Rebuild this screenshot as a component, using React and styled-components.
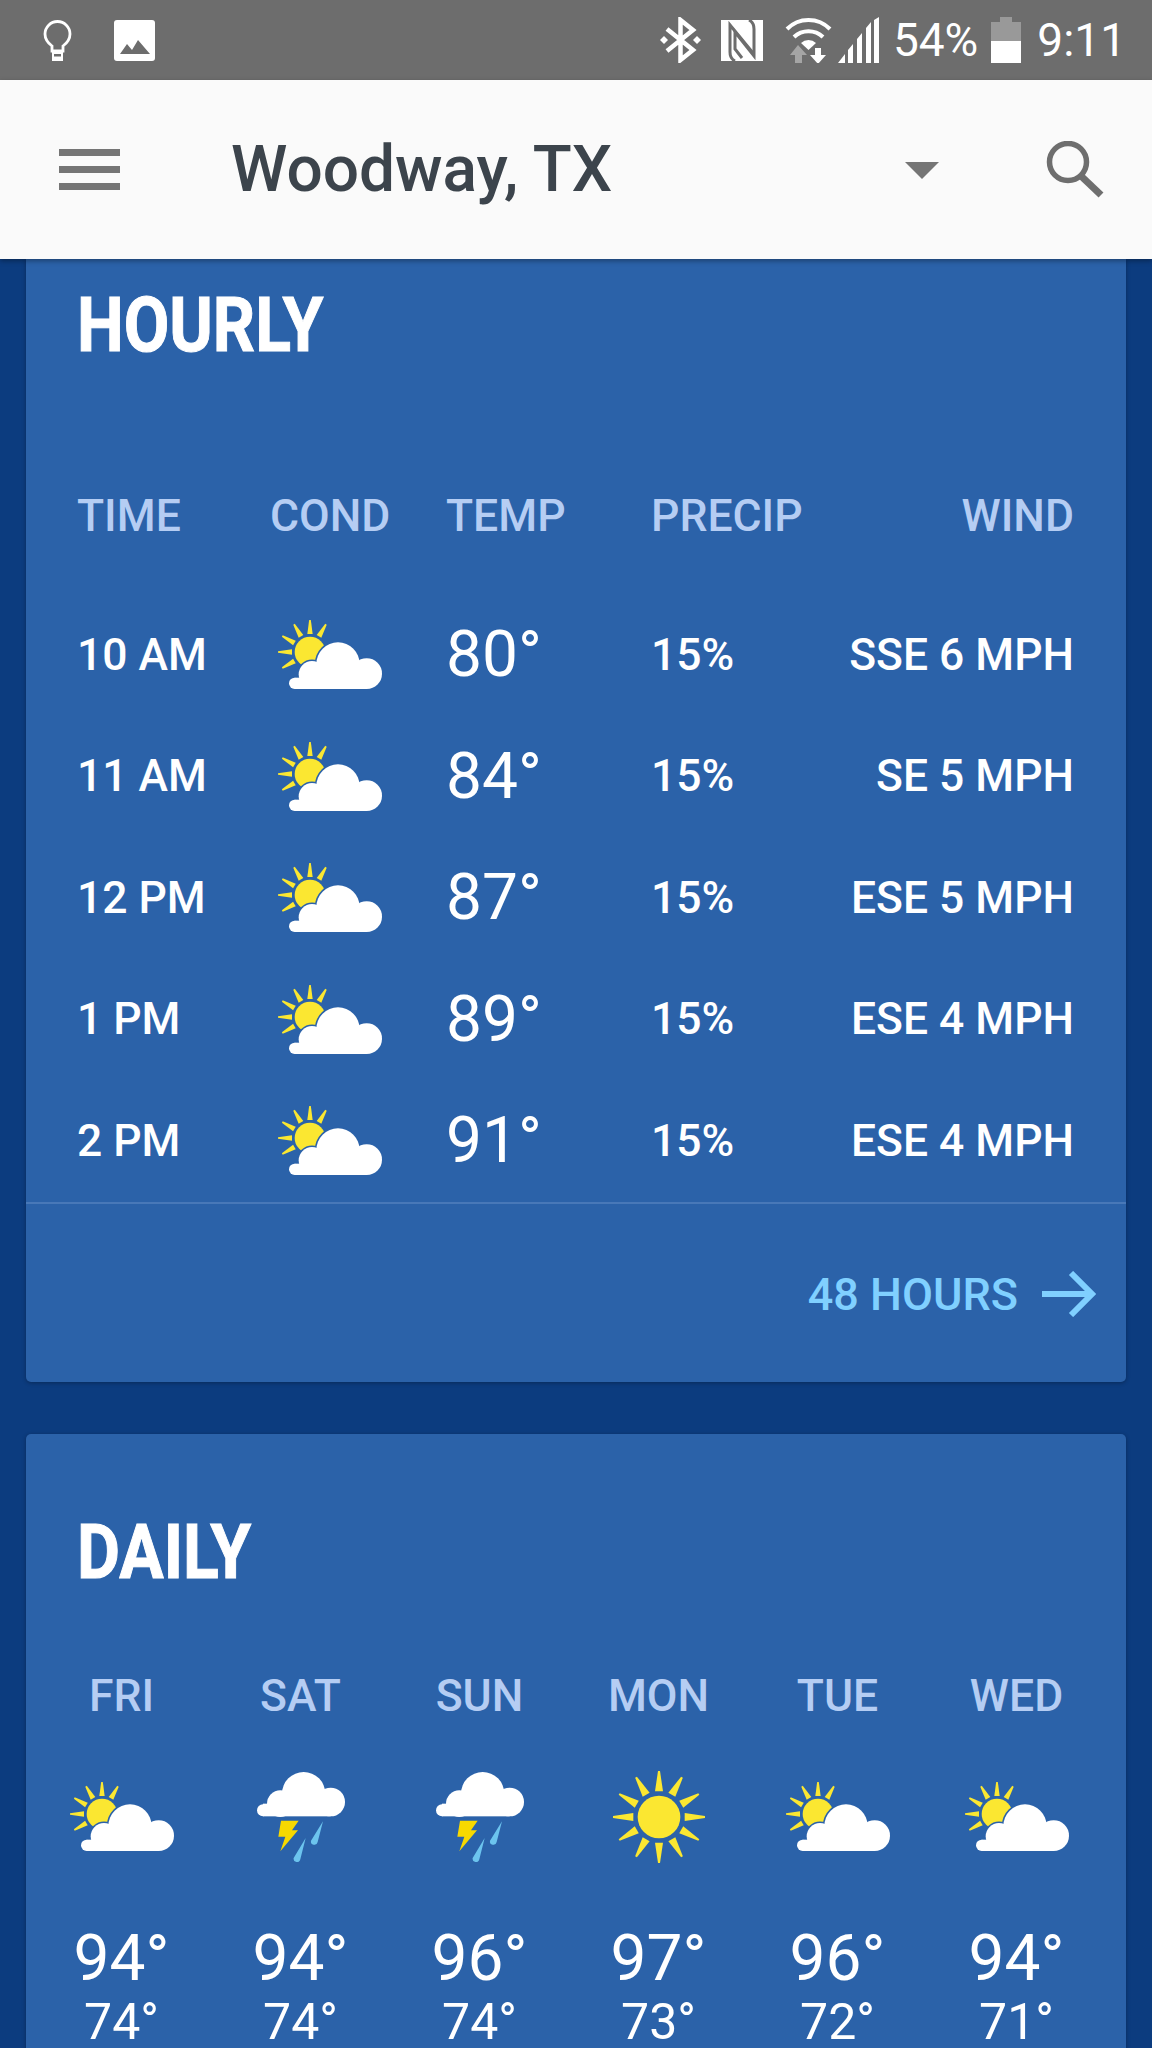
import styled, { createGlobalStyle } from 'styled-components';

const GlobalStyle = createGlobalStyle`
    html, body {
        margin: 0;
        padding: 0;
        background: #0c3c7f;
    }
    body {
        font-family: Roboto, "Liberation Sans", sans-serif;
    }
`;

const Page = styled.div`
    width: 1152px;
    height: 2048px;
    overflow: hidden;
    background: #0c3c7f;
`;

const StatusBar = styled.div`
    height: 80px;
    background: #6d6d6d;
    display: flex;
    align-items: center;
    padding: 0 26px 0 43px;
    color: #fff;
`;

const StatusSlot = styled.div`
    display: flex;
    align-items: center;
    margin-left: ${(p) => p.$gap || 0}px;
    margin-right: ${(p) => (p.$push ? 'auto' : '0')};
`;

const StatusText = styled.span`
    font-size: 46px;
    line-height: 80px;
    margin-left: ${(p) => p.$gap || 0}px;
`;

const AppBar = styled.header`
    position: relative;
    z-index: 2;
    height: 179px;
    background: #fafafa;
    display: flex;
    align-items: center;
    padding: 0 48px 0 59px;
    box-shadow: 0 2px 5px rgba(0, 0, 0, 0.35);
`;

const Burger = styled.div`
    width: 61px;
    display: flex;
    flex-direction: column;
    gap: 10px;
    margin-right: 111px;
    span {
        height: 7px;
        background: #757575;
    }
`;

const Title = styled.h1`
    flex: 1;
    margin: 0;
    font-size: 64px;
    font-weight: 500;
    color: #3c444c;
`;

const Caret = styled.div`
    width: 0;
    height: 0;
    border-left: 17px solid transparent;
    border-right: 17px solid transparent;
    border-top: 17px solid #757575;
    margin: 2px 107px 0 0;
`;

const Content = styled.main`
    padding: 0 26px;
    display: flex;
    flex-direction: column;
    gap: 52px;
`;

const Card = styled.section`
    background: #2b62a9;
    border-radius: ${(p) => (p.$flat ? '0 0 5px 5px' : '5px')};
    box-shadow: 0 1px 4px rgba(0, 0, 0, 0.3);
`;

const CardTitle = styled.h2`
    margin: 0;
    padding: ${(p) => p.$pad};
    font-size: 76px;
    line-height: 72px;
    font-weight: 700;
    color: #fff;
    -webkit-text-stroke: 1px #fff;
    transform: scaleX(0.87);
    transform-origin: 51px 0;
`;

const HourGrid = styled.div`
    display: grid;
    grid-template-columns: 193px 176px 205px 1fr auto;
    padding: 0 52px 0 51px;
    align-items: center;
    height: ${(p) => p.$height}px;
`;

const HeadCell = styled.div`
    font-size: 44.5px;
    font-weight: 500;
    color: #b5cdf3;
    text-align: ${(p) => (p.$right ? 'right' : 'left')};
    grid-column: ${(p) => (p.$right ? '5' : 'auto')};
`;

const TimeCell = styled.div`
    font-size: 44.4px;
    font-weight: 500;
    color: #fff;
    white-space: nowrap;
    grid-column: ${(p) => (p.$right ? '5' : 'auto')};
    justify-self: ${(p) => (p.$right ? 'end' : 'start')};
`;

const HourTemp = styled.div`
    font-size: 64px;
    color: #fff;
`;

const HourIcon = styled.div`
    display: flex;
    padding-left: 8px;
`;

const HourRows = styled.div`
    display: flex;
    flex-direction: column;
    padding: 3px 0 0;
`;

const Divider = styled.div`
    height: 2px;
    background: #4878b8;
`;

const CardFooter = styled.div`
    height: 178px;
    display: flex;
    align-items: center;
    justify-content: flex-end;
    padding: 3px 30px 0 0;
    box-sizing: border-box;
    gap: 24px;
    font-size: 45px;
    font-weight: 500;
    color: #80d0ff;
`;

const DayGrid = styled.div`
    display: grid;
    grid-template-columns: repeat(6, 179px);
    padding: 0 6px;
    justify-items: center;
    align-items: center;
    height: ${(p) => p.$height}px;
`;

const TempGrid = styled(DayGrid)`
    align-items: start;
    padding-top: 64px;
`;

const Low = styled.div`
    font-size: 50px;
    color: #fff;
    line-height: 50px;
    margin-top: 6px;
`;

const High = styled.div`
    font-size: 64px;
    color: #fff;
    line-height: 64px;
`;

const Temps = styled.div`
    display: flex;
    flex-direction: column;
    align-items: center;
`;

const Ray = ({ cx, cy, angle, r0, r1, w0, w1, fill }) => (
    <polygon
        fill={fill}
        transform={`translate(${cx} ${cy}) rotate(${angle})`}
        points={`${r0},${-w0} ${r1},${-w1} ${r1},${w1} ${r0},${w0}`}
    />
);

function PartlyCloudy() {
    const blobs = [
        [265, 187, 65],
        [351, 216, 46],
        [187, 218, 40],
        [135, 245, 17],
    ];
    return (
        <svg width="104" height="69" viewBox="85 55 312 207">
            {[-60, -90, -120, -150, 180, 150].map((a) => (
                <Ray key={a} cx={181} cy={151} angle={a} r0={54} r1={96} w0={8} w1={2.5} fill="#fbe731" />
            ))}
            <circle cx="181" cy="151" r="46" fill="#fbe731" />
            <g fill="#2b62a9" stroke="#2b62a9" strokeWidth="9">
                {blobs.map(([x, y, r]) => <circle key={x} cx={x} cy={y} r={r} />)}
            </g>
            <g fill="#fff">
                {blobs.map(([x, y, r]) => <circle key={x} cx={x} cy={y} r={r} />)}
                <rect x="135" y="228" width="216" height="34" />
            </g>
        </svg>
    );
}

function Storm() {
    return (
        <svg width="88" height="90" viewBox="50 70 264 270">
            <g fill="#fff">
                <circle cx="190" cy="135" r="65" />
                <circle cx="271" cy="160" r="43" />
                <circle cx="120" cy="165" r="40" />
                <circle cx="68" cy="185" r="18" />
                <rect x="68" y="165" width="203" height="38" />
            </g>
            <polygon points="122,216 175,216 155,245 173,245 120,308 135,264 114,264" fill="#f7d900" />
            <path d="M248 218 L232 280 A10 10 0 0 1 212 276 Z" fill="#6cc4ee" />
            <path d="M196 268 L180 332 A10 10 0 0 1 160 328 Z" fill="#6cc4ee" />
        </svg>
    );
}

function Sunny() {
    const angles = [0, 30, 60, 90, 120, 150, 180, 210, 240, 270, 300, 330];
    return (
        <svg width="92" height="92" viewBox="-138 -138 276 276">
            {angles.map((a) => (
                <Ray key={a} cx={0} cy={0} angle={a} r0={77} r1={138} w0={12} w1={3} fill="#fbe731" />
            ))}
            <circle r="64" fill="#fbe731" />
        </svg>
    );
}

const hours = [
    ['10 AM', '80°', '15%', 'SSE 6 MPH'],
    ['11 AM', '84°', '15%', 'SE 5 MPH'],
    ['12 PM', '87°', '15%', 'ESE 5 MPH'],
    ['1 PM', '89°', '15%', 'ESE 4 MPH'],
    ['2 PM', '91°', '15%', 'ESE 4 MPH'],
];

const days = [
    ['FRI', PartlyCloudy, '94°', '74°'],
    ['SAT', Storm, '94°', '74°'],
    ['SUN', Storm, '96°', '74°'],
    ['MON', Sunny, '97°', '73°'],
    ['TUE', PartlyCloudy, '96°', '72°'],
    ['WED', PartlyCloudy, '94°', '71°'],
];

export default function App() {
    return (
        <Page>
            <GlobalStyle />
            <StatusBar>
                <StatusSlot>
                    <svg width="29" height="41" viewBox="0 0 29 41">
                        <path d="M9 31 V26 C5 23 2 19 2 14 A12.5 12.5 0 0 1 27 14 C27 19 24 23 20 26 V31 Z" fill="none" stroke="#fff" strokeWidth="2.8" />
                        <rect x="9" y="30" width="11" height="11" fill="#fff" />
                        <rect x="11" y="34" width="7" height="2.5" fill="#6d6d6d" />
                    </svg>
                </StatusSlot>
                <StatusSlot $gap={42} $push>
                    <svg width="41" height="41" viewBox="0 0 41 41">
                        <rect width="41" height="41" rx="3" fill="#fff" />
                        <path d="M6 34 L13 24 L18 30 L24 20 L36 34 Z" fill="#6d6d6d" />
                    </svg>
                </StatusSlot>
                <StatusSlot>
                    <svg width="41" height="46" viewBox="0 0 41 46">
                        <path d="M7 12 L33 33 L20.5 43 V3 L33 13 L7 34" fill="none" stroke="#fff" strokeWidth="4.5" />
                        <path d="M0 23 L4 19 L8 23 L4 27 Z M33 23 L37 19 L41 23 L37 27 Z" fill="#fff" />
                    </svg>
                </StatusSlot>
                <StatusSlot $gap={20}>
                    <svg width="42" height="41" viewBox="0 0 42 41">
                        <rect width="42" height="41" fill="#fff" />
                        <g fill="none" stroke="#6d6d6d" strokeWidth="3">
                            <path d="M14 41 C10 39 9 36 9 32 V5 L32 33" />
                            <path d="M28 0 C32 2 33 5 33 9 V36 L14 12 V29 L21 38" />
                        </g>
                    </svg>
                </StatusSlot>
                <StatusSlot $gap={22}>
                    <svg width="47" height="46" viewBox="0 0 47 46">
                        <g fill="none" stroke="#fff" strokeWidth="4">
                            <path d="M2 12 A30 30 0 0 1 45 12" />
                            <path d="M9 20 A21 21 0 0 1 38 20" />
                        </g>
                        <path d="M16 26 A11 11 0 0 1 31 26 L23.5 33 Z" fill="#fff" />
                        <path d="M13 28 L22 38 H17 V46 H10 V38 H5 Z" fill="#a5a5a5" />
                        <path d="M30 31 H36 V38 H41 L33 47 L25 38 H30 Z" fill="#fff" />
                    </svg>
                </StatusSlot>
                <StatusSlot $gap={6}>
                    <svg width="42" height="46" viewBox="0 0 42 46" fill="#fff">
                        <path d="M0 46 L7 37 V46 Z M10 33 L15 27 V46 H10 Z M19 22 L24 16 V46 H19 Z M28 11 L33 5 V46 H28 Z M36 3 L41 0 V46 H36 Z" />
                    </svg>
                </StatusSlot>
                <StatusText $gap={13}>54%</StatusText>
                <StatusSlot $gap={13}>
                    <svg width="30" height="46" viewBox="0 0 30 46">
                        <path d="M9 0 H21 V5 H30 V24 H0 V5 H9 Z" fill="#999" />
                        <rect y="24" width="30" height="22" fill="#fff" />
                    </svg>
                </StatusSlot>
                <StatusText $gap={16}>9:11</StatusText>
            </StatusBar>
            <AppBar>
                <Burger>
                    <span />
                    <span />
                    <span />
                </Burger>
                <Title>Woodway, TX</Title>
                <Caret />
                <svg width="58" height="57" viewBox="0 0 58 57" fill="none" stroke="#6e6e6e">
                    <circle cx="22" cy="21" r="18.5" strokeWidth="5.5" />
                    <path d="M35 35 L55 54" strokeWidth="7" />
                </svg>
            </AppBar>
            <Content>
                <Card $flat>
                    <CardTitle $pad="30px 51px 80px">HOURLY</CardTitle>
                    <HourGrid $height={150}>
                        <HeadCell>TIME</HeadCell>
                        <HeadCell>COND</HeadCell>
                        <HeadCell>TEMP</HeadCell>
                        <HeadCell>PRECIP</HeadCell>
                        <HeadCell $right>WIND</HeadCell>
                    </HourGrid>
                    <HourRows>
                        {hours.map(([time, temp, precip, wind]) => (
                            <HourGrid $height={121.5} key={time}>
                                <TimeCell>{time}</TimeCell>
                                <HourIcon>
                                    <PartlyCloudy />
                                </HourIcon>
                                <HourTemp>{temp}</HourTemp>
                                <TimeCell>{precip}</TimeCell>
                                <TimeCell $right>{wind}</TimeCell>
                            </HourGrid>
                        ))}
                    </HourRows>
                    <Divider />
                    <CardFooter>
                        48 HOURS
                        <svg width="54" height="46" viewBox="0 0 54 46" fill="none" stroke="#80d0ff" strokeWidth="6">
                            <path d="M0 23 H50 M29 2 L50 23 L29 44" />
                        </svg>
                    </CardFooter>
                </Card>
                <Card>
                    <CardTitle $pad="82px 51px 33px">DAILY</CardTitle>
                    <DayGrid $height={150}>
                        {days.map(([name]) => <HeadCell key={name}>{name}</HeadCell>)}
                    </DayGrid>
                    <DayGrid $height={92}>
                        {days.map(([name, Icon]) => <Icon key={name} />)}
                    </DayGrid>
                    <TempGrid $height={300}>
                        {days.map(([name, , high, low]) => (
                            <Temps key={name}>
                                <High>{high}</High>
                                <Low>{low}</Low>
                            </Temps>
                        ))}
                    </TempGrid>
                </Card>
            </Content>
        </Page>
    );
}
